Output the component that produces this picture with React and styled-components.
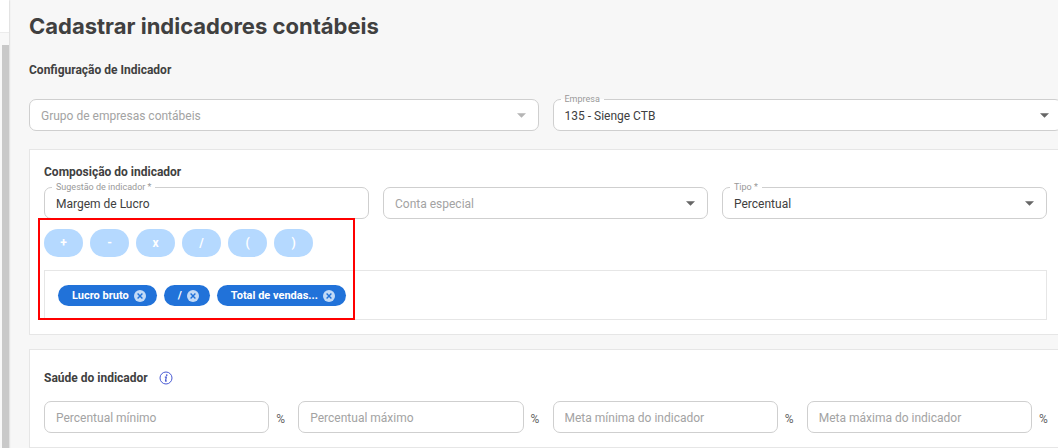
import React, { useState } from "react";
import styled, { createGlobalStyle } from "styled-components";

const GlobalStyle = createGlobalStyle`
  * {
    box-sizing: border-box;
  }
  body {
    margin: 0;
    background-color: #f7f7f7;
    color: #404040;
    font-family: Roboto, "Liberation Sans", sans-serif;
    font-size: 12px;
    line-height: 16px;
    overflow: hidden;
  }
  input, select, button {
    font-family: inherit;
  }
`;

const Page = styled.div`
  display: flex;
  min-height: 100vh;
`;

const Rail = styled.div`
  flex: none;
  width: 9px;
  display: flex;
  flex-direction: column;
  background-color: #f8f8f8;
  box-shadow: 0 0 2px rgba(0, 0, 0, 0.25);
`;

const RailTop = styled.div`
  height: 33px;
  background-color: #fff;
  border-bottom: 1px solid #ececec;
`;

const RailThumb = styled.div`
  flex: 1;
  margin: 12px 0 0 2px;
  background-color: #c9c9c9;
`;

const Main = styled.main`
  flex: 1;
  min-width: 0;
  padding: 12px 0 0 20px;
  margin-right: -4px;
`;

const Title = styled.h1`
  margin: 0;
  font-family: Inter, "Open Sans", sans-serif;
  font-size: 22px;
  font-weight: 700;
  line-height: 28px;
`;

const SectionTitle = styled.h2`
  margin: 0;
  font-size: 12px;
  font-weight: 700;
  line-height: 16px;
`;

const PageSection = styled.section`
  padding-top: 22px;
`;

const CompanyRow = styled.div`
  display: grid;
  grid-template-columns: repeat(2, 1fr);
  gap: 14px;
  margin: 21px 0 18px;
`;

const Card = styled.section`
  background-color: #fff;
  border: 1px solid #e6e6e6;
  padding: 14px;
  margin-bottom: 14px;
`;

const FieldRow = styled.div`
  display: grid;
  grid-template-columns: repeat(${(props) => props.$columns}, 1fr);
  gap: 14px;
  margin-top: ${(props) => props.$top};
`;

const FieldBox = styled.div`
  position: relative;
  flex: 1;
  min-width: 0;
  height: 32px;
  background-color: #fff;
  border: 1px solid #cfcfcf;
  border-radius: 7px;
`;

const FieldLabel = styled.label`
  position: absolute;
  top: -8px;
  left: 7px;
  padding: 0 4px;
  color: #999;
  font-size: 9px;
  line-height: 14px;
  background: linear-gradient(${(props) => props.$tone} 50%, #fff 50%);
`;

const Input = styled.input`
  width: 100%;
  height: 100%;
  padding: 1px 11px 0;
  border: 0;
  outline: 0;
  background: transparent;
  color: #404040;
  font-size: 12px;
  &::placeholder {
    color: #a3a3a3;
    opacity: 1;
  }
`;

const Select = styled.select`
  width: 100%;
  height: 100%;
  padding: 1px 30px 0 11px;
  border: 0;
  outline: 0;
  appearance: none;
  background: transparent;
  color: ${(props) => (props.$empty ? "#a3a3a3" : "#404040")};
  font-size: 12px;
  opacity: 1;
`;

const Arrow = styled.svg`
  position: absolute;
  top: 13px;
  right: 12px;
  width: 9px;
  height: 5px;
  fill: ${(props) => (props.$muted ? "#b5b5b5" : "#666")};
  pointer-events: none;
`;

const Composer = styled.div`
  position: relative;
  padding-top: 10px;
`;

const Operators = styled.div`
  display: flex;
  gap: 7px;
`;

const OperatorButton = styled.button`
  width: 39px;
  height: 28px;
  padding: 0;
  border: 0;
  border-radius: 14px;
  background-color: #b5d9ff;
  color: #fff;
  font-size: 12px;
  font-weight: 700;
`;

const Expression = styled.div`
  display: flex;
  gap: 7px;
  margin-top: 13px;
  padding: 14px 13px 13px;
  border: 1px solid #e6e6e6;
`;

const Chip = styled.span`
  display: inline-flex;
  align-items: center;
  gap: 5px;
  height: 21px;
  padding: 0 11px 0 14px;
  border-radius: 11px;
  background-color: #2172d9;
  color: #fff;
  font-size: 11px;
  font-weight: 700;
`;

const ChipRemove = styled.button`
  display: flex;
  padding: 0;
  border: 0;
  background: transparent;
  cursor: pointer;
`;

const Highlight = styled.div`
  position: absolute;
  top: -1px;
  bottom: 0;
  left: -6px;
  width: 317px;
  border: 2px solid #ff0000;
  pointer-events: none;
`;

const HealthHeader = styled.div`
  display: flex;
  align-items: center;
  gap: 11px;
  padding-top: 6px;
`;

const InfoButton = styled.button`
  display: flex;
  padding: 0;
  border: 0;
  background: transparent;
`;

const Measure = styled.div`
  display: flex;
  align-items: center;
  gap: 7px;
`;

const Unit = styled.span`
  width: 8px;
  padding-top: 3px;
  color: #666;
  font-size: 12px;
`;

const operators = ["+", "-", "x", "/", "(", ")"];

const healthFields = [
  { id: "pct-min", label: "Percentual mínimo" },
  { id: "pct-max", label: "Percentual máximo" },
  { id: "meta-min", label: "Meta mínima do indicador" },
  { id: "meta-max", label: "Meta máxima do indicador" },
];

const SelectField = ({ id, label, value, placeholder, disabled, tone }) => (
  <FieldBox>
    {label && (
      <FieldLabel htmlFor={id} $tone={tone || "#fff"}>
        {label}
      </FieldLabel>
    )}
    <Select
      id={id}
      aria-label={label ? undefined : placeholder}
      $empty={!value}
      disabled={disabled}
    >
      <option>{value || placeholder}</option>
    </Select>
    <Arrow viewBox="0 0 10 5" $muted={disabled}>
      <path d="M0 0h10L5 5z" />
    </Arrow>
  </FieldBox>
);

const App = () => {
  const [items, setItems] = useState(["Lucro bruto", "/", "Total de vendas..."]);

  const removeItem = (index) =>
    setItems(items.filter((item, i) => i !== index));

  return (
    <>
      <GlobalStyle />
      <Page>
        <Rail>
          <RailTop />
          <RailThumb />
        </Rail>
        <Main>
          <Title>Cadastrar indicadores contábeis</Title>
          <PageSection>
            <SectionTitle>Configuração de Indicador</SectionTitle>
            <CompanyRow>
              <SelectField
                id="grupo"
                placeholder="Grupo de empresas contábeis"
                disabled
              />
              <SelectField
                id="empresa"
                label="Empresa"
                value="135 - Sienge CTB"
                tone="#f7f7f7"
              />
            </CompanyRow>
          </PageSection>

          <Card>
            <SectionTitle>Composição do indicador</SectionTitle>
            <FieldRow $columns={3} $top="7px">
              <FieldBox>
                <FieldLabel htmlFor="sugestao" $tone="#fff">
                  Sugestão de indicador *
                </FieldLabel>
                <Input id="sugestao" defaultValue="Margem de Lucro" />
              </FieldBox>
              <SelectField id="conta" placeholder="Conta especial" />
              <SelectField id="tipo" label="Tipo *" value="Percentual" />
            </FieldRow>
            <Composer>
              <Operators>
                {operators.map((item) => (
                  <OperatorButton key={item} type="button" disabled>
                    {item}
                  </OperatorButton>
                ))}
              </Operators>
              <Expression>
                {items.map((item, index) => (
                  <Chip key={item}>
                    {item}
                    <ChipRemove
                      type="button"
                      aria-label={`Remover ${item}`}
                      onClick={() => removeItem(index)}
                    >
                      <svg width="12" height="12" viewBox="0 0 12 12">
                        <circle cx="6" cy="6" r="6" fill="#c3daf6" />
                        <path
                          d="M3.6 3.6l4.8 4.8M8.4 3.6L3.6 8.4"
                          stroke="#2172d9"
                          strokeWidth="1.4"
                        />
                      </svg>
                    </ChipRemove>
                  </Chip>
                ))}
              </Expression>
              <Highlight />
            </Composer>
          </Card>

          <Card>
            <HealthHeader>
              <SectionTitle>Saúde do indicador</SectionTitle>
              <InfoButton type="button" aria-label="Informações">
                <svg width="14" height="14" viewBox="0 0 14 14" fill="none">
                  <circle cx="7" cy="7" r="6" stroke="#4a5bd4" />
                  <circle cx="7.7" cy="4.1" r="0.9" fill="#4a5bd4" />
                  <path
                    d="M5.8 6.2h1.5l-.8 3.6c0 .5.5.4 1.3-.1"
                    stroke="#4a5bd4"
                    strokeWidth="1.2"
                  />
                </svg>
              </InfoButton>
            </HealthHeader>
            <FieldRow $columns={4} $top="15px">
              {healthFields.map((field) => (
                <Measure key={field.id}>
                  <FieldBox>
                    <Input
                      id={field.id}
                      aria-label={field.label}
                      placeholder={field.label}
                    />
                  </FieldBox>
                  <Unit>%</Unit>
                </Measure>
              ))}
            </FieldRow>
          </Card>
        </Main>
      </Page>
    </>
  );
};

export default App;
